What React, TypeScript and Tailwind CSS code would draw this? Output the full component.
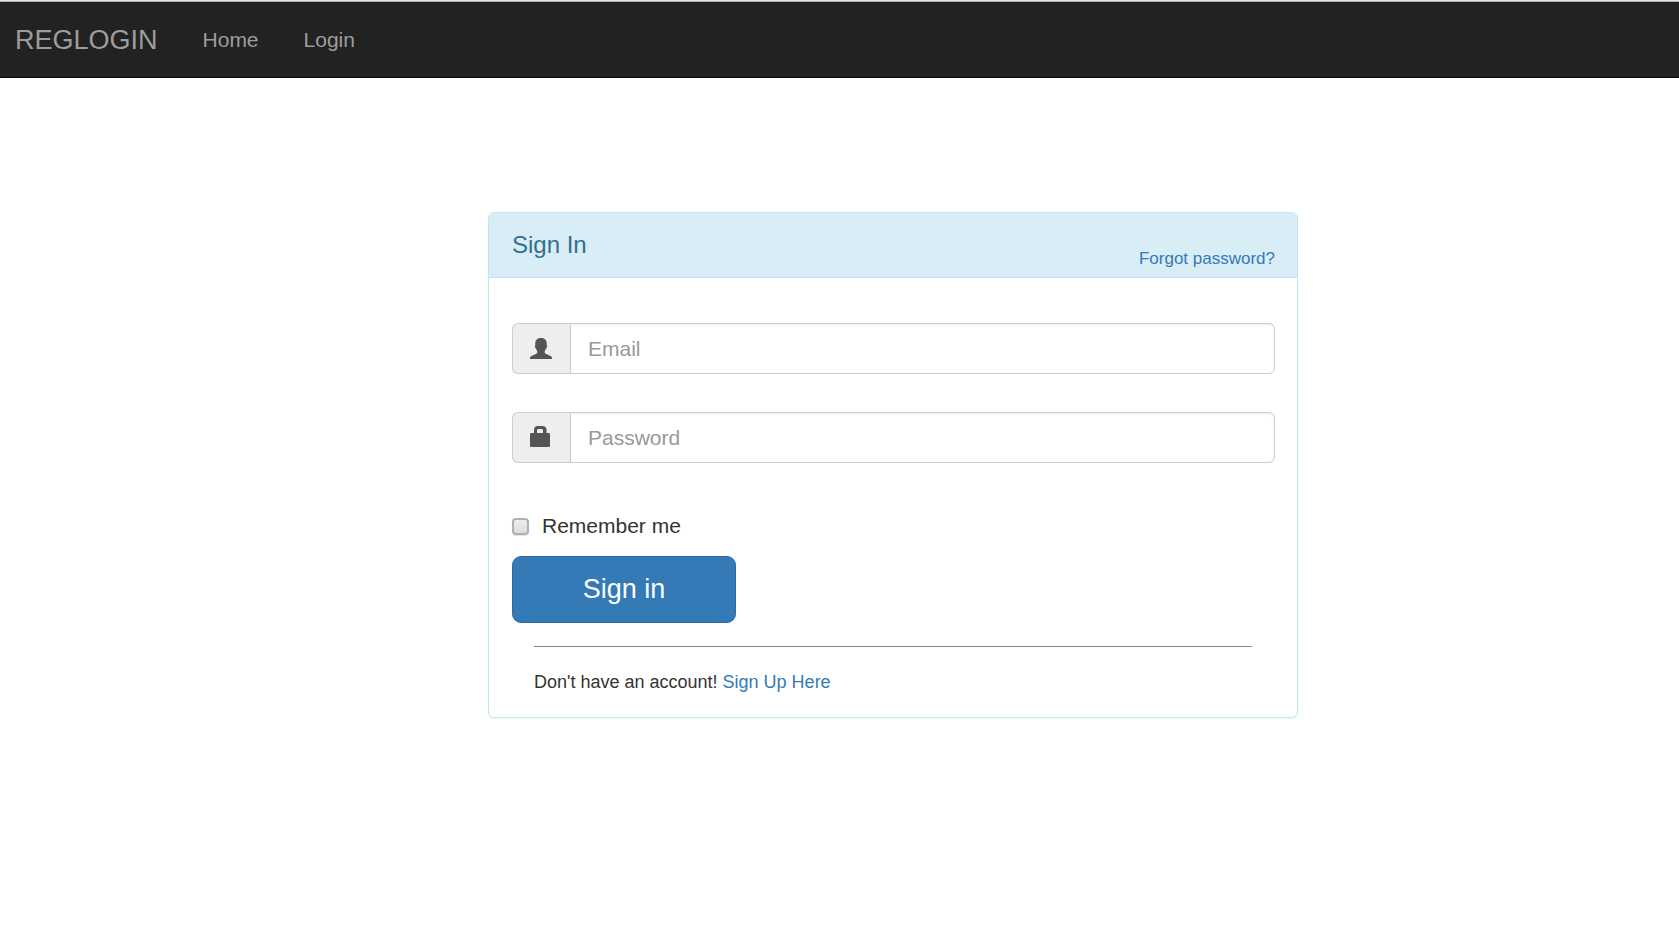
import React from "react";

function UserIcon() {
  return (
    <svg viewBox="0 0 22 21" className="h-[21px] w-[22px] fill-[#555]" aria-hidden="true">
      <path d="M11 0C7.600 0 5.300 2 5.300 5.200v2c-.5.300-.5 1-.3 1.800.2.900.6 1.500 1.100 1.700.3 1.100.7 1.900 1.200 2.500v1.300c0 .5-.4.900-1 1.200L1.500 18C.5 18.500 0 19.100 0 20v1h22v-1c0-.9-.5-1.500-1.500-2l-4.800-2.300c-.6-.3-1-.7-1-1.200v-1.300c.5-.6.900-1.400 1.200-2.500.5-.2.900-.8 1.100-1.700.2-.8.200-1.500-.3-1.800v-2C16.700 2 14.400 0 11 0z" />
    </svg>
  );
}

function LockIcon() {
  return (
    <svg viewBox="0 0 20 23" className="h-[23px] w-[20px] fill-[#555]" aria-hidden="true">
      <path
        fillRule="evenodd"
        d="M7.500 0h5c2.300 0 4 1.500 4 3.500V7h2.200C19.400 7 20 7.600 20 8.300v11.400c0 .7-.6 1.300-1.300 1.300H1.300C.6 21 0 20.400 0 19.700V8.300C0 7.600.6 7 1.300 7H4V3.500C4 1.500 5.500 0 7.500 0zM8.500 3C7.600 3 7 3.600 7 4.500V7h6V4.500C13 3.600 12.400 3 11.500 3h-3z"
      />
    </svg>
  );
}

type FieldProps = {
  id: string;
  type: string;
  placeholder: string;
  icon: React.ReactNode;
};

function Field({ id, type, placeholder, icon }: FieldProps) {
  return (
    <div className="flex h-[51px]">
      <label
        htmlFor={id}
        aria-label={placeholder}
        className="flex w-[58px] shrink-0 items-center rounded-l-md border border-r-0 border-[#ccc] bg-[#eee] pl-[17px]"
      >
        {icon}
      </label>
      <input
        id={id}
        type={type}
        placeholder={placeholder}
        className="min-w-0 flex-1 rounded-r-md border border-[#ccc] bg-white px-[17px] text-[21px] leading-[30px] text-[#555] shadow-[inset_0_1px_2px_rgba(0,0,0,0.075)] outline-none placeholder:text-[#999] focus:border-[#66afe9]"
      />
    </div>
  );
}

export default function App() {
  return (
    <div className="min-h-screen border-t border-[#e3e7e6] bg-white font-['Liberation_Sans',Arial,sans-serif] text-[21px] leading-[30px] text-[#333]">
      <nav className="flex h-[77px] items-center gap-[45px] border-t border-b border-t-[#a9adac] border-b-[#080808] bg-[#222] px-[15px] text-[#9d9d9d]">
        <a href="#" className="text-[27px]">
          REGLOGIN
        </a>
        <a href="#home">Home</a>
        <a href="#login">Login</a>
      </nav>

      <main className="flex justify-center pt-[134px] pl-[107px]">
        <section className="w-full max-w-[810px] rounded-md border border-[#bce8f1] bg-white shadow-[0_1px_2px_rgba(0,0,0,0.05)]">
          <header className="flex h-[65px] justify-between rounded-t-[5px] border-b border-[#bce8f1] bg-[#d9edf7] pr-[22px] pl-[23px]">
            <h1 className="pt-[18px] text-2xl leading-[28px] text-[#31708f]">Sign In</h1>
            <a href="#forgot" className="self-end pb-1.5 text-[17px] leading-6 text-[#337ab7]">
              Forgot password?
            </a>
          </header>

          <form className="pt-[45px] pr-[22px] pb-[22px] pl-[23px]" onSubmit={(e) => e.preventDefault()}>
            <div className="flex flex-col gap-[38px]">
              <Field id="email" type="text" placeholder="Email" icon={<UserIcon />} />
              <Field id="password" type="password" placeholder="Password" icon={<LockIcon />} />
            </div>

            <label className="mt-12 flex w-fit items-center gap-[13px]">
              <input
                type="checkbox"
                className="size-[17px] appearance-none rounded-[4px] border-2 border-[#b0b0b0] bg-linear-to-b from-[#eee] to-[#dcdcdc] shadow-[0_1px_1px_rgba(0,0,0,0.12)] checked:from-[#337ab7] checked:to-[#337ab7]"
              />
              Remember me
            </label>

            <button
              type="submit"
              className="mt-[15px] block h-[67px] w-[224px] rounded-[9px] border border-[#2e6da4] bg-[#337ab7] pb-0.5 text-[27px] leading-9 text-white"
            >
              Sign in
            </button>

            <div className="mr-[23px] ml-[22px] mt-[23px] border-t border-[#888] pt-[22px] text-lg leading-[26px]">
              Don't have an account!{" "}
              <a href="#signup" className="text-[#337ab7]">
                Sign Up Here
              </a>
            </div>
          </form>
        </section>
      </main>
    </div>
  );
}
